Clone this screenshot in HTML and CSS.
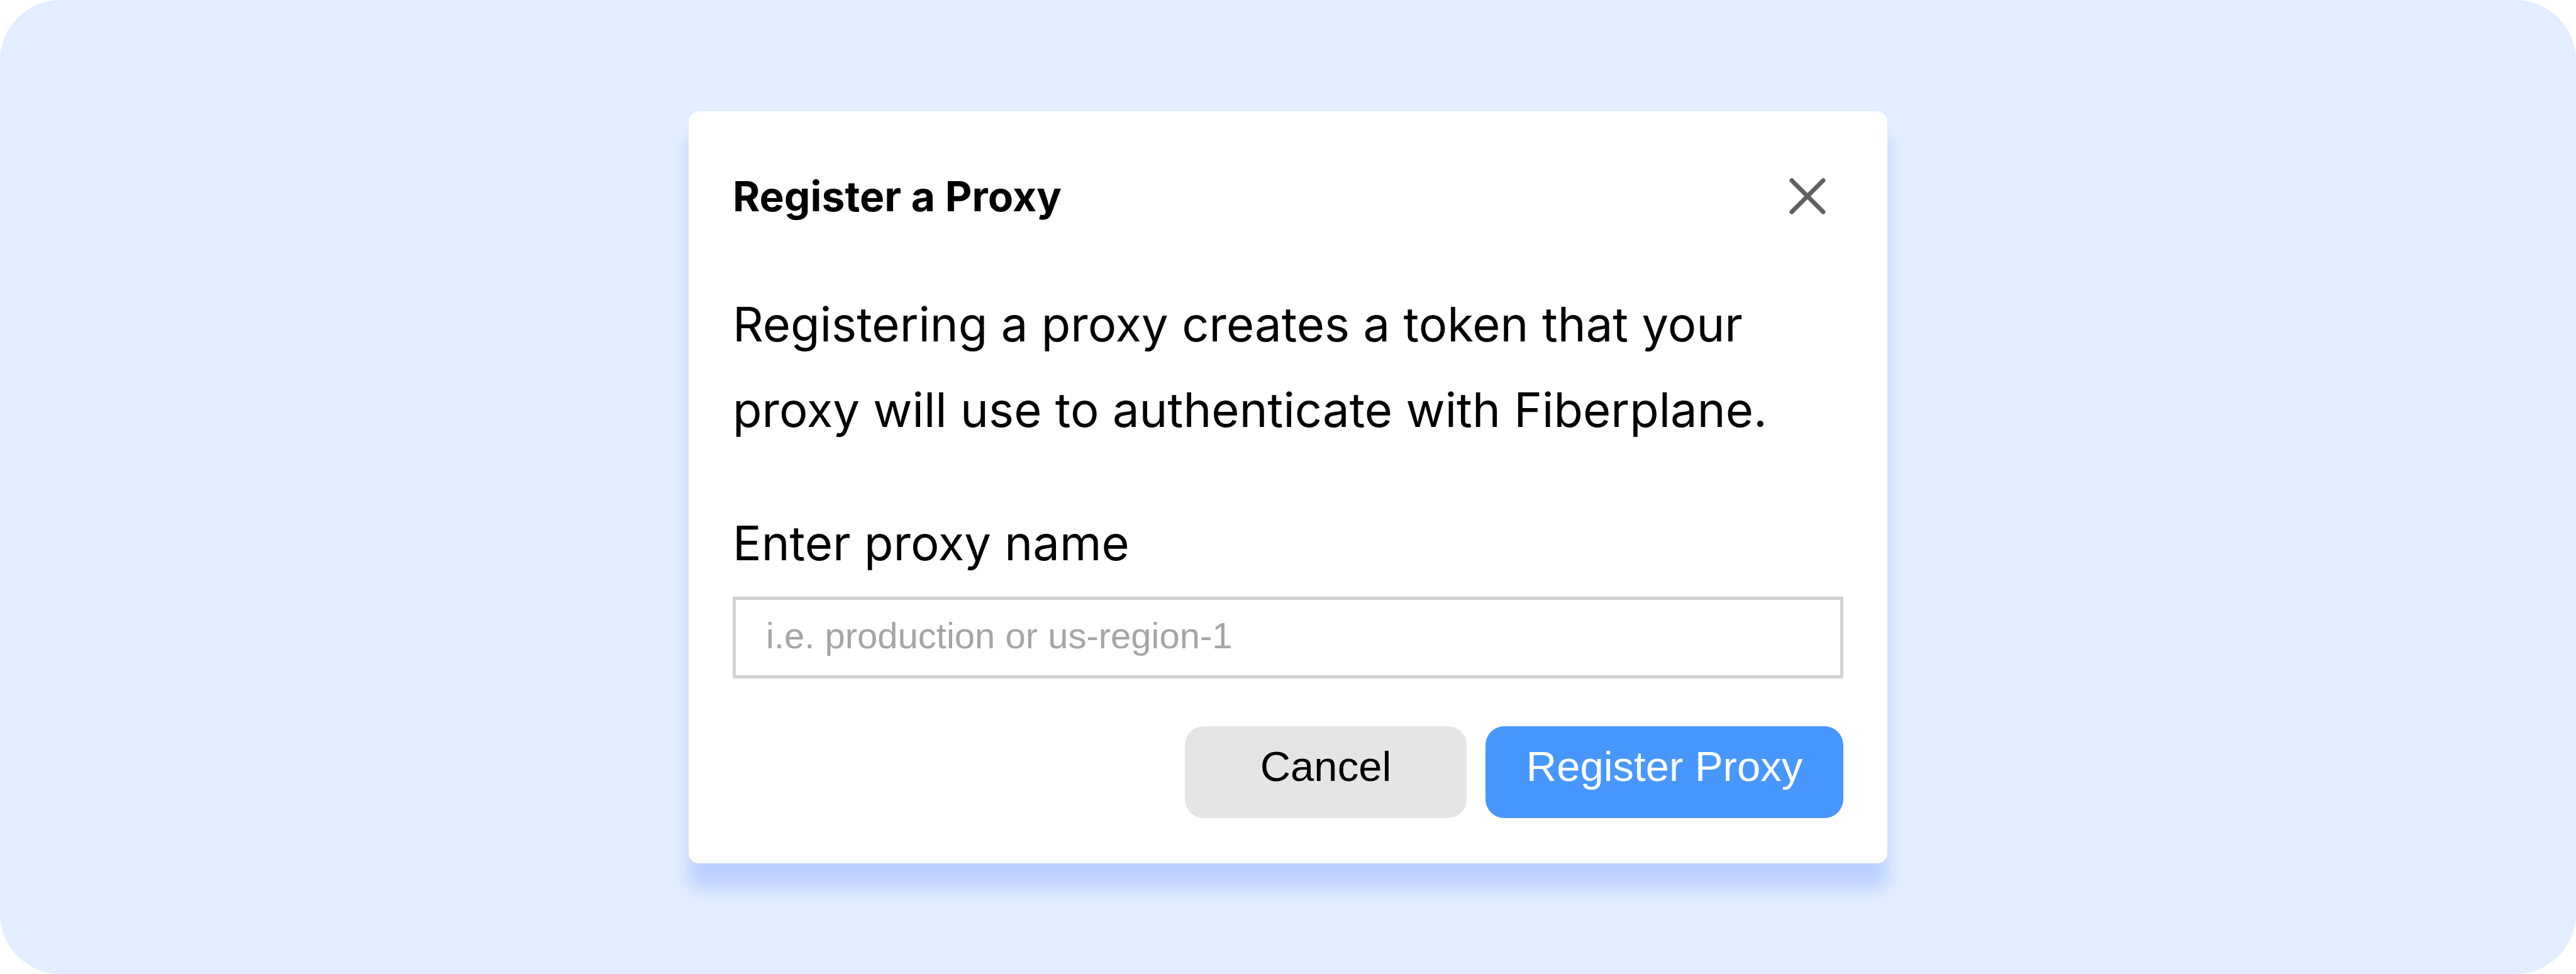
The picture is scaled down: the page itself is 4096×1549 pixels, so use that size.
FILE: index.html
```html
<!DOCTYPE html>
<html lang="en">
<head>
<meta charset="utf-8">
<title>Register a Proxy</title>
<link rel="stylesheet" href="styles.css">
</head>
<body>
<main class="stage">
  <form class="dialog" role="dialog" aria-labelledby="title">
    <header class="dialog-header">
      <h1 class="title" id="title">Register a Proxy</h1>
      <button class="close" type="button" aria-label="Close">
        <svg class="close-icon" viewBox="0 0 58 58" aria-hidden="true"><path d="M4 4L54 54M54 4L4 54"/></svg>
      </button>
    </header>
    <p class="intro">Registering a proxy creates a token that your proxy will use to authenticate with Fiberplane.</p>
    <label class="label" for="name">Enter proxy name</label>
    <input class="field" id="name" type="text" placeholder="i.e. production or us-region-1">
    <footer class="actions">
      <button class="button cancel" type="button">Cancel</button>
      <button class="button primary" type="submit">Register Proxy</button>
    </footer>
  </form>
</main>
</body>
</html>
```
FILE: styles.css
```css
* {
  box-sizing: border-box;
}

body {
  margin: 0;
  background: #fff;
  font-family: Inter, sans-serif;
  color: #000;
}

.stage {
  display: flex;
  justify-content: center;
  align-items: center;
  min-height: 100vh;
  background: #e2eeff;
  border-radius: 96px;
}

.dialog {
  display: flex;
  flex-direction: column;
  width: 1906px;
  max-width: 100%;
  padding: 72px 70px;
  background: #fff;
  border-radius: 16px;
  box-shadow: 0 40px 28px #bccfff;
}

.dialog-header {
  display: flex;
  justify-content: space-between;
  align-items: center;
  height: 126px;
  padding-right: 28px;
}

.title {
  margin: 0;
  font-size: 66px;
  font-weight: 700;
  line-height: 88px;
}

.close {
  display: flex;
  padding: 0;
  border: 0;
  background: none;
}

.close-icon {
  width: 58px;
  height: 58px;
  fill: none;
  stroke: #5f6165;
  stroke-width: 7;
  stroke-linecap: round;
}

.intro {
  margin: 72px 0 76px;
  font-size: 76px;
  line-height: 136px;
}

.label {
  font-size: 76px;
  line-height: 136px;
}

.field {
  height: 130px;
  margin-top: 18px;
  padding: 0 48px 6px;
  border: 5px solid #d1d1d1;
  font-family: "Liberation Sans", Arial, sans-serif;
  font-size: 58px;
}

.field::placeholder {
  color: #a5a5a5;
}

.actions {
  display: flex;
  justify-content: flex-end;
  gap: 30px;
  margin-top: 76px;
}

.button {
  height: 146px;
  padding: 0 0 18px;
  border: 0;
  border-radius: 30px;
  font-family: "Liberation Sans", Arial, sans-serif;
  font-size: 67px;
}

.cancel {
  width: 448px;
  background: #e5e5e5;
  color: #000;
}

.primary {
  width: 569px;
  background: #4797ff;
  color: #fff;
}
```
